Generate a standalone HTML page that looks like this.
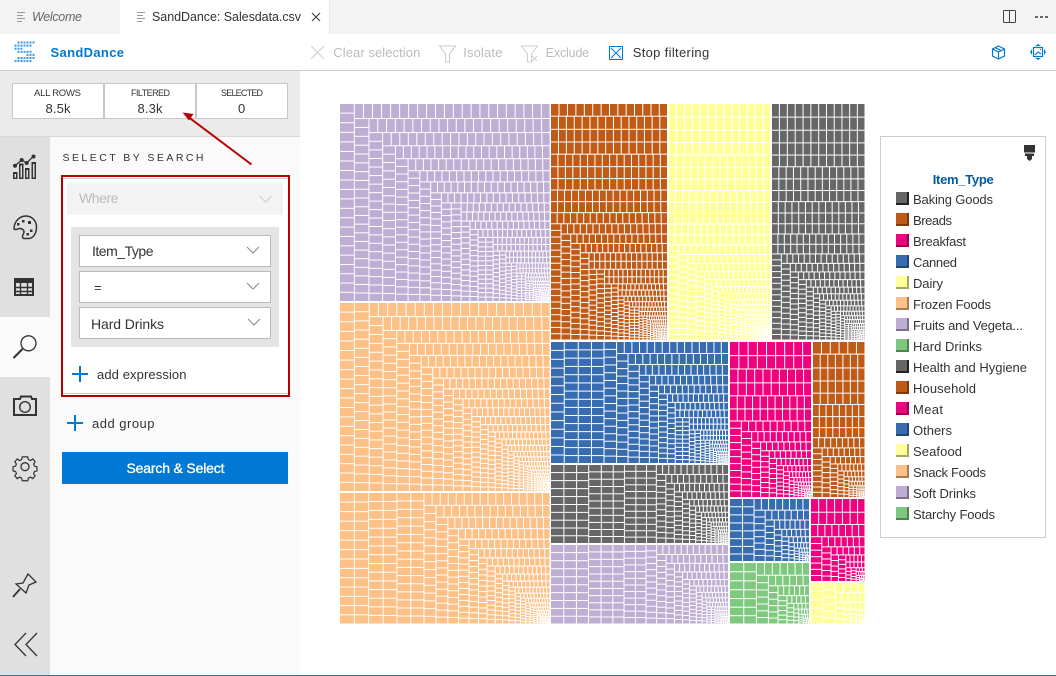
<!DOCTYPE html>
<html><head><meta charset="utf-8"><title>SandDance</title>
<style>
html,body{margin:0;padding:0;width:1056px;height:676px;overflow:hidden;background:#fff}
.b{position:absolute;box-sizing:border-box}
svg{position:absolute;left:0;top:0}
text{font-family:"Liberation Sans",sans-serif;font-size:13px;fill:#333}
.d{fill:#bbb}
.s{font-size:9.5px}
.ic{fill:none;stroke:#333;stroke-width:2}
.ch{fill:none;stroke:#888;stroke-width:1}
</style></head><body>
<div class="b" style="left:0;top:0;width:1056px;height:34px;background:#f3f3f3"></div>
<div class="b" style="left:120px;top:0;width:210px;height:34px;background:#fff;border-right:1px solid #e8e8e8"></div>
<div class="b" style="left:0;top:70px;width:1056px;height:1px;background:#ccc"></div>
<div class="b" style="left:0;top:71px;width:300px;height:66px;background:#ebebeb;border-bottom:1px solid #d9d9d9"></div>
<div class="b" style="left:12px;top:83px;width:92px;height:36px;background:#fff;border:1px solid #c8c8c8"></div>
<div class="b" style="left:104px;top:83px;width:92px;height:36px;background:#fff;border:1px solid #c8c8c8"></div>
<div class="b" style="left:196px;top:83px;width:92px;height:36px;background:#fff;border:1px solid #c8c8c8"></div>
<div class="b" style="left:0;top:137px;width:50px;height:538px;background:#e0e0e0"></div>
<div class="b" style="left:50px;top:137px;width:250px;height:538px;background:#fafafa"></div>
<div class="b" style="left:0;top:317px;width:50px;height:60px;background:#fafafa"></div>
<div class="b" style="left:0;top:675px;width:1056px;height:1px;background:#1a7ab8"></div>
<div class="b" style="left:61px;top:175px;width:229px;height:222px;background:#fff;border:2px solid #b80000"></div>
<div class="b" style="left:63px;top:178px;width:225px;height:1px;background:#ccc"></div>
<div class="b" style="left:63px;top:393px;width:225px;height:1px;background:#ccc"></div>
<div class="b" style="left:67px;top:183px;width:216px;height:32px;background:#f3f3f3"></div>
<div class="b" style="left:71px;top:227px;width:208px;height:120px;background:#e4e4e4"></div>
<div class="b" style="left:79px;top:235px;width:192px;height:32px;background:#fff;border:1px solid #bbb"></div>
<div class="b" style="left:79px;top:271px;width:192px;height:32px;background:#fff;border:1px solid #bbb"></div>
<div class="b" style="left:79px;top:307px;width:192px;height:32px;background:#fff;border:1px solid #bbb"></div>
<div class="b" style="left:62px;top:452px;width:226px;height:32px;background:#0078d4"></div>
<div class="b" style="left:880px;top:136px;width:166px;height:402px;background:#fff;border:1px solid #ccc"></div>

<svg id="m" width="1056" height="676" viewBox="0 0 1056 676" xmlns="http://www.w3.org/2000/svg">
<g id="tm"></g>
<g stroke="#999" stroke-width="1"><path d="M17 12.500h8M17 15.500h6M17 18.500h8M17 21.500h5M137 12.500h8M137 15.500h6M137 18.500h8M137 21.500h5"/></g>
<text x="32" y="21" textLength="50" font-style="italic" style="fill:#666;font-size:12.500px">Welcome</text>
<text x="152" y="21" textLength="149" style="font-size:12.500px">SandDance: Salesdata.csv</text>
<path d="M312 13l8 8M320 13l-8 8" stroke="#444" stroke-width="1.200" fill="none"/>
<rect x="1003.500" y="10.500" width="12" height="12" rx="1" fill="none" stroke="#444"/><path d="M1009.500 10v13" stroke="#444"/>
<path d="M1035 16h3v2h-3zM1040 16h3v2h-3zM1045 16h3v2h-3z" fill="#666"/>

<g id="logo" fill="#3d9ae0"></g>
<text x="50.500" y="57" textLength="73.500" font-weight="bold" style="fill:#0078d4">SandDance</text>
<path d="M311 46l13 13M324 46l-13 13" stroke="#ccc" fill="none"/>
<text class="d" x="333.300" y="57" textLength="87">Clear selection</text>
<path d="M439.500 46h16l-6 8v8h-4v-8z" stroke="#ccc" fill="none"/>
<text class="d" x="463.300" y="57" textLength="39">Isolate</text>
<path d="M521.500 46h16l-6 8v8h-4v-8z" stroke="#ccc" fill="none"/><path d="M532 56l5 5M537 56l-5 5" stroke="#ccc" fill="none"/>
<text class="d" x="545.700" y="57" textLength="43.500" style="font-size:12.500px">Exclude</text>
<rect x="609.500" y="46.500" width="13" height="13" fill="none" stroke="#0078d4"/><path d="M611 48l10 10M621 48l-10 10" stroke="#0078d4" fill="none"/>
<text x="632.700" y="57" textLength="76.500">Stop filtering</text>
<g fill="none" stroke="#0078d4" stroke-width="1.200"><path d="M998.500 46l6 3v7l-6 3-6-3v-7zM992.500 49l6 3 6-3M998.500 52v7M995 47.500l6 3"/>
<rect x="1033.500" y="47.500" width="9" height="9"/><path d="M1035 55l3-3 3 2M1040 49.500h1"/></g>
<path d="M1038 44l3 2h-6zM1038 60l3-2h-6zM1030 52l2-3v6zM1046 52l-2-3v6z" fill="#0078d4"/>

<text class="s" x="34" y="96" textLength="47">ALL ROWS</text>
<text x="45.500" y="113" textLength="25">8.5k</text>
<text class="s" x="131" y="96" textLength="39" style="font-size:9px">FILTERED</text>
<text x="137.500" y="113" textLength="25">8.3k</text>
<text class="s" x="221" y="96" textLength="42" style="font-size:9px">SELECTED</text>
<text x="238" y="113" textLength="8">0</text>
<path d="M251.500 164.500L187 116" stroke="#b80000" stroke-width="2" fill="none"/>
<path d="M182.500 112.500l11 1.500-4.500 6.500z" fill="#b80000"/>

<text x="62.500" y="161" textLength="141" style="font-size:10.500px">SELECT BY SEARCH</text>
<text class="d" x="79" y="203" textLength="39.500" style="font-size:14px">Where</text>
<path class="ch" d="M259.500 196l6 6 6-6" style="stroke:#ccc"/>
<text x="92" y="256" textLength="61.500" style="font-size:14px">Item_Type</text>
<path class="ch" d="M247 247l6 6 6-6"/>
<text x="94" y="292" textLength="6.500" style="font-size:13px">=</text>
<path class="ch" d="M247 283l6 6 6-6"/>
<text x="91" y="329" textLength="73" style="font-size:14px">Hard Drinks</text>
<path class="ch" d="M248 319l6 6 6-6"/>
<path d="M80 366v16M72 374h16M75 415v16M67 423h16" stroke="#0078d4" stroke-width="2" fill="none"/>
<text x="97" y="379" textLength="89.500">add expression</text>
<text x="92" y="428" textLength="62.500">add group</text>
<text x="126.500" y="473" textLength="98" style="fill:#fff;stroke:#fff;stroke-width:.35;font-size:14px">Search &amp; Select</text>

<g fill="#333"><rect x="13" y="172" width="4.500" height="7"/><rect x="19" y="163.500" width="4.500" height="15.500"/><rect x="25" y="168" width="4.500" height="11"/><rect x="31.500" y="162" width="4.500" height="17"/></g>
<rect x="14.500" y="174" width="1.500" height="3.500" fill="#e0e0e0"/><rect x="20.500" y="165.500" width="1.500" height="12" fill="#e0e0e0"/><rect x="26.500" y="170" width="1.500" height="7.500" fill="#e0e0e0"/><rect x="33" y="164" width="1.500" height="13.500" fill="#e0e0e0"/>
<path d="M15 165.700L21.700 160 26.700 163 33 156.700" stroke="#333" stroke-width="1.300" fill="none"/>
<g fill="#333"><circle cx="15" cy="165.700" r="2"/><circle cx="21.700" cy="160" r="2"/><circle cx="26.700" cy="163" r="2"/><circle cx="33.500" cy="156.500" r="2"/></g>
<path class="ic" d="M14 229c0-8 6-13 12-13 6 0 10.500 5 10.500 11 0 6-3 11.500-8 11.500h-4c-1.500 0-2-1-2-2 0-2 1.500-3 1.500-4.500 0-2-2-3.500-4-3.500-3 0-3.500 2-6 .5z" style="stroke-width:1.500"/>
<g fill="#333"><rect x="17" y="223" width="2.500" height="2.500"/><rect x="22" y="220" width="2.500" height="2.500"/><rect x="28" y="221" width="3" height="3"/><rect x="30" y="229.500" width="2.500" height="2.500"/><rect x="26.500" y="233" width="2.500" height="2.500"/></g>
<rect x="15" y="279" width="18" height="16" class="ic"/><path d="M14 287.500h20M14 291.500h20M20.500 282v13M27.500 282v13" stroke="#333" stroke-width="1.400" fill="none"/><rect x="14" y="278" width="20" height="5" fill="#333"/>
<circle cx="28.500" cy="343.300" r="7.500" class="ic" style="stroke-width:1.300"/><path d="M22.500 349l-9 9" stroke="#333" stroke-width="2" fill="none"/>
<path class="ic" d="M14 399h6l1-2.500h10l1 2.500h4v16H14z"/><circle cx="25" cy="407" r="5.300" class="ic" style="stroke-width:1.400"/>
<g transform="translate(25 466.700) scale(.92) translate(-25 -466.700)"><path class="ic" style="stroke-width:1.300" d="M22 456h6l.7 3 2.300 1 2.500-1.700 2.500 3-1.700 2.500 1 2.300 2.700.6v4.600l-2.700.6-1 2.300 1.700 2.500-2.500 3-2.500-1.700-2.300 1-.7 3h-6l-.7-3-2.300-1-2.500 1.700-2.500-3 1.700-2.500-1-2.300-2.700-.6v-4.600l2.700-.6 1-2.300-1.700-2.500 2.500-3 2.500 1.700 2.300-1z"/></g><circle cx="25" cy="466.700" r="4" class="ic" style="stroke-width:1.300"/>
<path class="ic" style="stroke-width:1.300" d="M16 584l7-1 5-9 8 8-7 3-3 8z"/><path d="M20 589l-7 8" stroke="#333" stroke-width="1.800"/>
<path class="ic" style="stroke-width:1.300" d="M26 633l-11 11.500L26 656M37 633l-11 11.500L37 656"/>

<path d="M1024 145h11v7.500h-11zM1025 153.500h9v2.500h-9zM1027 156h5v3l-2.500 2-2.500-2z" fill="#333"/>
<text x="932.700" y="184" textLength="61" font-weight="bold" style="fill:#005a9e">Item_Type</text>
<g id="lg"></g>
<text x="913" y="204" textLength="80">Baking Goods</text>
<text x="913" y="225" textLength="39">Breads</text>
<text x="913" y="246" textLength="53">Breakfast</text>
<text x="913" y="267" textLength="44">Canned</text>
<text x="913" y="288" textLength="30">Dairy</text>
<text x="913" y="309" textLength="78">Frozen Foods</text>
<text x="913" y="330" textLength="110">Fruits and Vegeta...</text>
<text x="913" y="351" textLength="69">Hard Drinks</text>
<text x="913" y="372" textLength="114">Health and Hygiene</text>
<text x="913" y="393" textLength="63">Household</text>
<text x="913" y="414" textLength="30">Meat</text>
<text x="913" y="435" textLength="39">Others</text>
<text x="913" y="456" textLength="49">Seafood</text>
<text x="913" y="477" textLength="73">Snack Foods</text>
<text x="913" y="498" textLength="63">Soft Drinks</text>
<text x="913" y="519" textLength="82">Starchy Foods</text>
</svg>
<script>
(function(){
var NS="http://www.w3.org/2000/svg";
function R(p,x,y,w,h,f){var r=document.createElementNS(NS,"rect");r.setAttribute("x",x);r.setAttribute("y",y);r.setAttribute("width",w);r.setAttribute("height",h);if(f)r.setAttribute("fill",f);p.appendChild(r);}
var tm=document.getElementById("tm");
var g="#666666",b="#bf5b17",p="#f0027f",u="#386cb0",y="#ffff99",o="#fdc086",v="#beaed4",n="#7fc97f";
function cell(x,y,w,h,c){var G=1;R(tm,x.toFixed(2),y.toFixed(2),Math.max(w-G,.25).toFixed(2),Math.max(h-G,.25).toFixed(2),c);}
function fill(x0,y0,x1,y1,c,A0){
 var area=(x1-x0)*(y1-y0),P=1.5,E=3;
 var N=Math.round(area/(A0/(P+1)+E)),a=[],i,tot=0;
 for(i=0;i<N;i++){var q=A0*Math.pow(1-i/N,P)+E;a.push(q);tot+=q;}
 var sc=area/tot;for(i=0;i<N;i++)a[i]*=sc;
 var rem=area,ratio=1.618,s=0;
 while(s<N){
  var dx=x1-x0,dy=y1-y0,e=s,sum=a[s],mn=a[s],mx=a[s];
  var alpha=Math.max(dy/dx,dx/dy)/(rem*ratio);
  var beta=sum*sum*alpha,best=Math.max(mx/beta,beta/mn);
  for(e=s+1;e<N;e++){
   var val=a[e],ns=sum+val,nn=Math.min(mn,val),nx=Math.max(mx,val);
   beta=ns*ns*alpha;var nr=Math.max(nx/beta,beta/nn);
   if(nr>best)break;
   sum=ns;mn=nn;mx=nx;best=nr;
  }
  if(dx<dy){
   var h=sum/dx,cx=x0;
   for(i=s;i<e;i++){var w=a[i]/h;cell(cx,y0,w,h,c);cx+=w;}
   y0+=h;
  }else{
   var w2=sum/dy,cy=y0;
   for(i=s;i<e;i++){var h2=a[i]/w2;cell(x0,cy,w2,h2,c);cy+=h2;}
   x0+=w2;
  }
  rem-=sum;s=e;
 }
}
[[340,104,550.5,302,v,140],[340,303,550.5,492,o,140],[340,493,550.5,624.500,o,140],
 [551,104,668,340.500,b,105],[669,104,771,340.500,y,105],[772,104,865.500,340.500,g,105],
 [551,342,729,464,u,120],[730,342,812,498,p,130],[813,342,865.500,498,b,110],
 [551,465,729,544,g,105],[551,545,729,624.500,v,105],
 [730,499,810,562,u,105],[811,499,865.500,582,p,110],[730,563,810,624.500,n,130],[811,583,865.500,624.500,y,110]
].forEach(function(a){fill.apply(null,a);});
var lg=document.getElementById("lg");
var cols=[g,b,p,u,y,o,v,n,g,b,p,u,y,o,v,n],dark=["#222","#7d3a0e","#9c0152","#234672","#a6a663","#a57d57","#7c718a","#528252"];
cols.forEach(function(c,i){var t=192+21*i;R(lg,896,t,13,13,dark[i%8]);R(lg,896,t,11,11,c);});
var lo=document.getElementById("logo");
var mask=[".XXXXXX","XXXXXX.","XXX....",".XXXXX.","....XXX",".XXXXXX","XXXXXX."];
mask.forEach(function(r,j){for(var i=0;i<7;i++)if(r[i]=="X")R(lo,14.500+i*3,41.500+j*3.100,2,2);});
})();
</script>
</body></html>
